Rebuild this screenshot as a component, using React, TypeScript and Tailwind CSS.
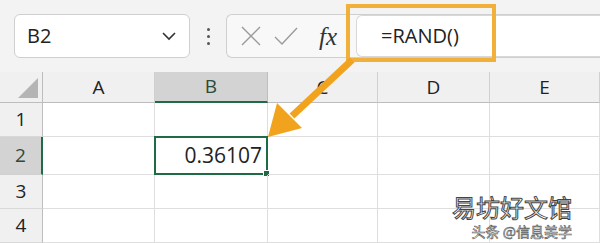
import React from 'react';

const cols = ['A', 'B', 'C', 'D', 'E'];
const rows = [1, 2, 3, 4];

const App: React.FC = () => {
  return (
    <div className="relative w-[600px] h-[243px] overflow-hidden bg-white font-['Open_Sans',sans-serif] text-[#222]">
      {/* Formula bar */}
      <div className="flex items-center h-[72px] bg-[#f3f3f3] pl-[14px]">
        <div className="flex items-center justify-between w-[176px] h-[44px] rounded-md border border-[#cfcfcf] bg-white pl-[12px] pr-[12px]">
          <span className="text-[20px]">B2</span>
          <svg width="16" height="10" viewBox="0 0 16 10">
            <path d="M2 2 L8 8 L14 2" fill="none" stroke="#333" strokeWidth="1.6" />
          </svg>
        </div>
        <div className="flex flex-col gap-[4px] w-[36px] items-center">
          <span className="w-[3px] h-[3px] rounded-full bg-[#555]" />
          <span className="w-[3px] h-[3px] rounded-full bg-[#555]" />
          <span className="w-[3px] h-[3px] rounded-full bg-[#555]" />
        </div>
        <div className="flex items-center flex-1 h-[44px] rounded-l-md border border-r-0 border-[#cfcfcf] bg-[#f8f8f8] pl-[12px]">
          <svg width="24" height="24" viewBox="0 0 24 24">
            <path d="M3 3 L21 21 M21 3 L3 21" stroke="#9a9a9a" strokeWidth="1.4" fill="none" />
          </svg>
          <svg width="26" height="24" viewBox="0 0 26 24" className="ml-[10px]">
            <path d="M2 13 L9 20 L24 4" stroke="#9a9a9a" strokeWidth="1.4" fill="none" />
          </svg>
          <span className="ml-[20px] text-[25px] italic font-['Liberation_Serif',serif] text-[#333] leading-none">fx</span>
          <div className="ml-[19px] flex items-center flex-1 h-[42px] rounded-l-md border border-r-0 border-[#d8d8d8] bg-white pl-[24px]">
            <span className="text-[20px]">=RAND()</span>
          </div>
        </div>
      </div>

      {/* Grid */}
      <div className="grid grid-cols-[43px_112px_113px_110px_112px_110px] grid-rows-[31px_34px_38px_34px_34px]">
        <div className="relative bg-[#f0f0f0] border-r border-b border-[#bdbdbd]">
          <svg width="22" height="20" viewBox="0 0 22 20" className="absolute left-[18px] bottom-[4px]">
            <path d="M20 0 L20 20 L0 20 Z" fill="#b4b4b4" />
          </svg>
        </div>
        {cols.map((c) => (
          <div
            key={c}
            className={
              c === 'B'
                ? 'flex items-center justify-center bg-[#d3d3d3] border-r border-[#bdbdbd] border-b-2 border-b-[#1e6b45] text-[19px] text-[#2d4a3b]'
                : 'flex items-center justify-center bg-[#f0f0f0] border-r border-b border-[#d0d0d0] border-b-[#bdbdbd] text-[19px]'
            }
          >
            {c}
          </div>
        ))}
        {rows.map((r) => (
          <React.Fragment key={r}>
            <div
              className={
                r === 2
                  ? 'flex items-center justify-center bg-[#d3d3d3] border-r-2 border-r-[#1e6b45] border-b border-[#d0d0d0] text-[19px] text-[#2d4a3b]'
                  : 'flex items-center justify-center bg-[#f0f0f0] border-r border-r-[#bdbdbd] border-b border-[#d8d8d8] text-[19px]'
              }
            >
              {r}
            </div>
            {cols.map((c) => (
              <div key={c} className="relative border-r border-b border-[#dedede]">
                {r === 2 && c === 'B' && (
                  <div className="absolute -left-[1px] -top-[1px] w-[114px] h-[39px] border-2 border-[#1e6b45] flex items-center justify-end pr-[4px] text-[21px]">
                    0.36107
                    <span className="absolute -right-[4px] -bottom-[4px] w-[7px] h-[7px] bg-[#1e6b45] border border-white" />
                  </div>
                )}
              </div>
            ))}
          </React.Fragment>
        ))}
      </div>

      {/* Highlight and arrow */}
      <div className="absolute left-[346px] top-[4px] w-[150px] h-[58px] border-[4px] border-[#f0b03a]" />
      <svg className="absolute left-0 top-0" width="600" height="243" viewBox="0 0 600 243">
        <path d="M352 60 L292 116" stroke="#f2a31d" strokeWidth="7" fill="none" />
        <path d="M268 137 L277 103 L302 128 Z" fill="#f2a31d" />
      </svg>

      {/* Watermark */}
      <div className="absolute left-[452px] top-[193px] flex flex-col items-end gap-[2px] font-['Noto_Sans_CJK_SC',sans-serif] text-white">
        <span className="text-[24px] leading-[28px] [-webkit-text-stroke:1px_#444]">易坊好文馆</span>
        <span className="text-[14px] leading-[16px] [-webkit-text-stroke:0.6px_#555]">头条 @信息美学</span>
      </div>
    </div>
  );
};

export default App;
